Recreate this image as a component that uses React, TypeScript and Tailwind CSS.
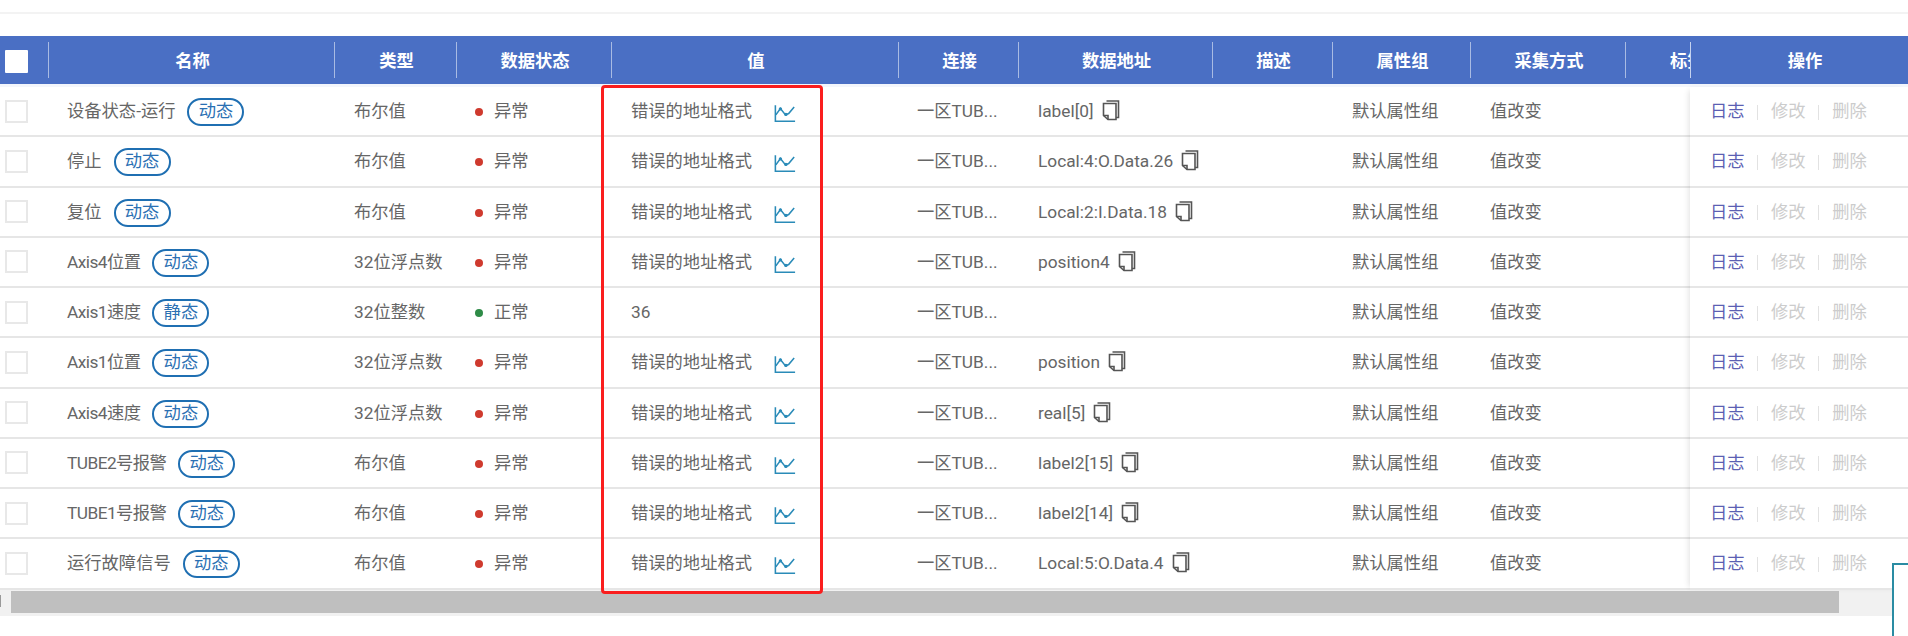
const font = { fontFamily: 'Roboto, "Noto Sans CJK SC", sans-serif' };

type Row = { name: string; tag: string; type: string; ok?: boolean; value: string; addr: string };

const rows: Row[] = [
  { name: "设备状态-运行", tag: "动态", type: "布尔值", value: "错误的地址格式", addr: "label[0]" },
  { name: "停止", tag: "动态", type: "布尔值", value: "错误的地址格式", addr: "Local:4:O.Data.26" },
  { name: "复位", tag: "动态", type: "布尔值", value: "错误的地址格式", addr: "Local:2:I.Data.18" },
  { name: "Axis4位置", tag: "动态", type: "32位浮点数", value: "错误的地址格式", addr: "position4" },
  { name: "Axis1速度", tag: "静态", type: "32位整数", ok: true, value: "36", addr: "" },
  { name: "Axis1位置", tag: "动态", type: "32位浮点数", value: "错误的地址格式", addr: "position" },
  { name: "Axis4速度", tag: "动态", type: "32位浮点数", value: "错误的地址格式", addr: "real[5]" },
  { name: "TUBE2号报警", tag: "动态", type: "布尔值", value: "错误的地址格式", addr: "label2[15]" },
  { name: "TUBE1号报警", tag: "动态", type: "布尔值", value: "错误的地址格式", addr: "label2[14]" },
  { name: "运行故障信号", tag: "动态", type: "布尔值", value: "错误的地址格式", addr: "Local:5:O.Data.4" },
];

const headers = [
  { t: "名称", w: "w-[286px]" },
  { t: "类型", w: "w-[122px]" },
  { t: "数据状态", w: "w-[155px]" },
  { t: "值", w: "w-[287px]" },
  { t: "连接", w: "w-[120px]" },
  { t: "数据地址", w: "w-[194px]" },
  { t: "描述", w: "w-[120px]" },
  { t: "属性组", w: "w-[138px]" },
  { t: "采集方式", w: "w-[155px]" },
];

function ChartIcon() {
  return (
    <svg width="22" height="19" viewBox="0 0 24 20" fill="none" stroke="#2a8bb8" strokeWidth="1.7" className="shrink-0 mt-[3px]">
      <path d="M1.5 1v17.5H23" />
      <path d="M2 11.5 7 4.5l5.5 7L16 10l6-7" />
      <circle cx="7" cy="5" r="1" fill="#2a8bb8" />
      <circle cx="13" cy="11" r="1" fill="#2a8bb8" />
    </svg>
  );
}

function CopyIcon() {
  return (
    <svg width="18" height="21" viewBox="0 0 18 21" fill="none" stroke="#555" strokeWidth="1.6" className="shrink-0 mb-[3px]">
      <path d="M4.5 1h12v16.5H14" />
      <path d="M1.5 3.5h12.5v16H6L1.5 15.5V3.5z" />
      <path d="M1.5 15.5H6v4" />
    </svg>
  );
}

function App() {
  return (
    <div className="relative w-[1908px] h-[636px] overflow-hidden bg-white text-[17.3px] text-[#666]" style={font}>
      <div className="h-[12px] border-b-2 border-[#f3f3f3] box-content" />
      <div className="h-[22px]" />

      <div className="flex h-[48px] bg-[#4a6fc4] text-white font-bold">
        <div className="flex w-[1690px] overflow-hidden items-center">
          <div className="w-[49px] h-[36px] shrink-0 flex items-center border-r border-[#a9bbe3] pl-[5px]">
            <div className="w-[23px] h-[23px] mt-[3px] bg-white rounded-[1px]" />
          </div>
          {headers.map((h) => (
            <div key={h.t} className={`${h.w} h-[36px] pt-[3px] pl-[2px] shrink-0 flex items-center justify-center border-r border-[#a9bbe3]`}>
              {h.t}
            </div>
          ))}
          <div className="flex-1 h-[36px] pt-[3px] flex items-center pl-[44px] whitespace-nowrap">标签</div>
        </div>
        <div className="flex-1 flex items-center justify-center relative pl-[12px] pt-[3px]">
          <div className="absolute left-0 top-[6px] h-[36px] border-l border-[#c5d2ef]" />
          操作
        </div>
      </div>
      <div className="h-[3px] bg-[#f3f6fc]" />

      <div className="flex">
        <div className="w-[1690px] shrink-0">
          {rows.map((r) => (
            <div key={r.name} className="flex items-center h-[50.25px] pt-[2px] border-b-2 border-[#e6e6e6]">
              <div className="w-[49px] pl-[5px] shrink-0">
                <div className="w-[23px] h-[23px] mb-[2px] bg-white border-2 border-[#e8e8e8]" />
              </div>
              <div className="w-[286px] shrink-0 flex items-center pl-[18px] gap-[12px]">
                <span className={`whitespace-nowrap ${/^[A-Z]/.test(r.name) ? "tracking-[-0.55px]" : ""}`}>{r.name}</span>
                <span className="w-[57px] h-[28px] shrink-0 rounded-full border-2 border-[#1f6fb2] text-[#2a70b3] flex items-center justify-center">
                  {r.tag}
                </span>
              </div>
              <div className="w-[122px] shrink-0 pl-[19px]">{r.type}</div>
              <div className="w-[155px] shrink-0 pl-[18px] flex items-center gap-[11px]">
                <span className={`w-[8px] h-[8px] rounded-full ${r.ok ? "bg-[#2e8b47]" : "bg-[#cf3a2e]"}`} />
                <span>{r.ok ? "正常" : "异常"}</span>
              </div>
              <div className="w-[287px] shrink-0 pl-[19px] flex items-center gap-[22px]">
                <span>{r.value}</span>
                {!r.ok && <ChartIcon />}
              </div>
              <div className="w-[120px] shrink-0 pl-[18px] whitespace-nowrap">一区TUB...</div>
              <div className="w-[194px] shrink-0 pl-[19px] flex items-center gap-[8px]">
                {r.addr && (
                  <>
                    <span className="whitespace-nowrap">{r.addr}</span>
                    <CopyIcon />
                  </>
                )}
              </div>
              <div className="w-[120px] shrink-0" />
              <div className="w-[138px] shrink-0 pl-[19px]">默认属性组</div>
              <div className="w-[155px] shrink-0 pl-[19px]">值改变</div>
            </div>
          ))}
        </div>
        <div className="flex-1 shadow-[-4px_0_6px_-3px_rgba(0,0,0,0.12)]">
          {rows.map((r) => (
            <div key={r.name} className="flex items-center h-[50.25px] pt-[2px] border-b-2 border-[#e6e6e6] pl-[20px] text-[#ccc]">
              <span className="text-[#5c5fb3]">日志</span>
              <span className="w-[1.5px] h-[15px] bg-[#e2e2e2] ml-[12px] mr-[13px]" />
              <span>修改</span>
              <span className="w-[1.5px] h-[15px] bg-[#e2e2e2] ml-[12px] mr-[13px]" />
              <span>删除</span>
            </div>
          ))}
        </div>
      </div>

      <div className="h-[26.5px] bg-[#f1f1f1] pt-[1.5px] pr-[69px] flex items-start">
        <div className="w-[1px] h-[12px] mt-[4px] bg-[#999] mr-[10px]" />
        <div className="flex-1 h-[22px] bg-[#bfbfbf]" />
      </div>

      <div className="absolute left-[601px] top-[85px] w-[222px] h-[509px] border-[3px] border-[#fa1e1e] rounded-[4px]" />
      <div className="absolute left-[1892px] top-[563px] w-[40px] h-[100px] bg-white border-2 border-[#2a8ca3]" />
    </div>
  );
}

export default App;
